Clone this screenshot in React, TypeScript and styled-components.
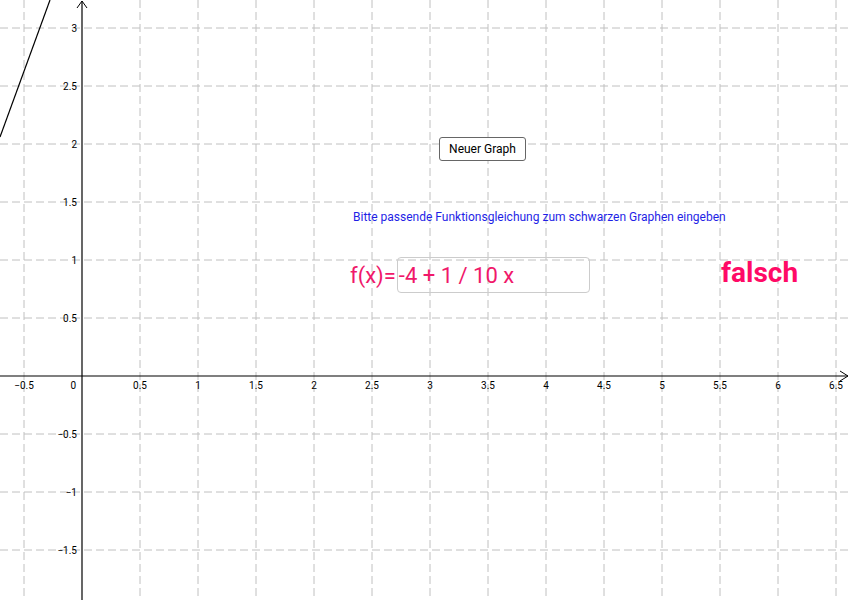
import React from 'react';
import styled, { createGlobalStyle } from 'styled-components';

const Global = createGlobalStyle`
  body { margin: 0; background: #fff; font-family: Roboto, "Liberation Sans", sans-serif; }
`;

const Canvas = styled.div`
  position: relative;
  width: 850px;
  height: 600px;
  overflow: hidden;
  background: #fff;
`;

const Board = styled.svg`
  position: absolute;
  left: 0;
  top: 0;
`;

const GraphButton = styled.button`
  position: absolute;
  left: 439px;
  top: 137px;
  width: 87px;
  height: 24px;
  border: 1.5px solid #666;
  border-radius: 3px;
  background: #fff;
  font-family: Roboto, sans-serif;
  font-size: 12px;
  color: #000;
  padding: 0;
`;

const Hint = styled.div`
  position: absolute;
  left: 353px;
  top: 210px;
  font-size: 12px;
  color: #1f1fe6;
  white-space: nowrap;
`;

const InputRow = styled.div`
  position: absolute;
  left: 350px;
  top: 257px;
  display: flex;
  align-items: center;
  color: #f0186a;
  font-size: 22px;
`;

const InputBox = styled.div`
  width: 190px;
  height: 34px;
  border: 1px solid #ccc;
  border-radius: 4px;
  display: flex;
  align-items: center;
  padding-left: 1px;
  margin-left: 1px;
`;

const Verdict = styled.div`
  position: absolute;
  left: 721px;
  top: 256px;
  font-size: 28px;
  font-weight: bold;
  color: #ff0a66;
`;

const ox = 82;
const oy = 376;
const step = 58;

const fmt = (v: number) => (v < 0 ? '\u2212' + Math.abs(v) : String(v));

export default function App() {
  const xs: number[] = [];
  for (let k = -1; k <= 13; k++) xs.push(k);
  const ys: number[] = [];
  for (let k = -3; k <= 6; k++) ys.push(k);
  return (
    <Canvas>
      <Global />
      <Board width={850} height={600}>
        {xs.filter(k => k !== 0).map(k => (
          <line key={'gx' + k} x1={ox + k * step} y1={0} x2={ox + k * step} y2={600} stroke="#c0c0c0" strokeDasharray="8 4" />
        ))}
        {ys.filter(k => k !== 0).map(k => (
          <line key={'gy' + k} x1={0} y1={oy - k * step} x2={850} y2={oy - k * step} stroke="#c0c0c0" strokeDasharray="8 4" />
        ))}
        <line x1={0} y1={oy} x2={848} y2={oy} stroke="#000" strokeWidth={1.2} />
        <line x1={ox} y1={600} x2={ox} y2={1} stroke="#000" strokeWidth={1.2} />
        <polyline points="840,371 848,376 840,381" fill="none" stroke="#000" />
        <polyline points="77,8 82,1 87,8" fill="none" stroke="#000" />
        <line x1={0} y1={137} x2={50} y2={0} stroke="#000" strokeWidth={1.2} />
        <g fontFamily="Roboto, sans-serif" fontSize={10} fill="#000">
          {xs.filter(k => k !== 0).map(k => (
            <text key={'lx' + k} x={ox + k * step} y={389} textAnchor="middle">{fmt(k / 2)}</text>
          ))}
          <text x={76} y={389} textAnchor="end">0</text>
          {ys.filter(k => k !== 0).map(k => (
            <text key={'ly' + k} x={77} y={oy - k * step + 4} textAnchor="end">{fmt(k / 2)}</text>
          ))}
        </g>
      </Board>
      <GraphButton>Neuer Graph</GraphButton>
      <Hint>Bitte passende Funktionsgleichung zum schwarzen Graphen eingeben</Hint>
      <InputRow>
        f(x)=
        <InputBox>-4 + 1 / 10 x</InputBox>
      </InputRow>
      <Verdict>falsch</Verdict>
    </Canvas>
  );
}
